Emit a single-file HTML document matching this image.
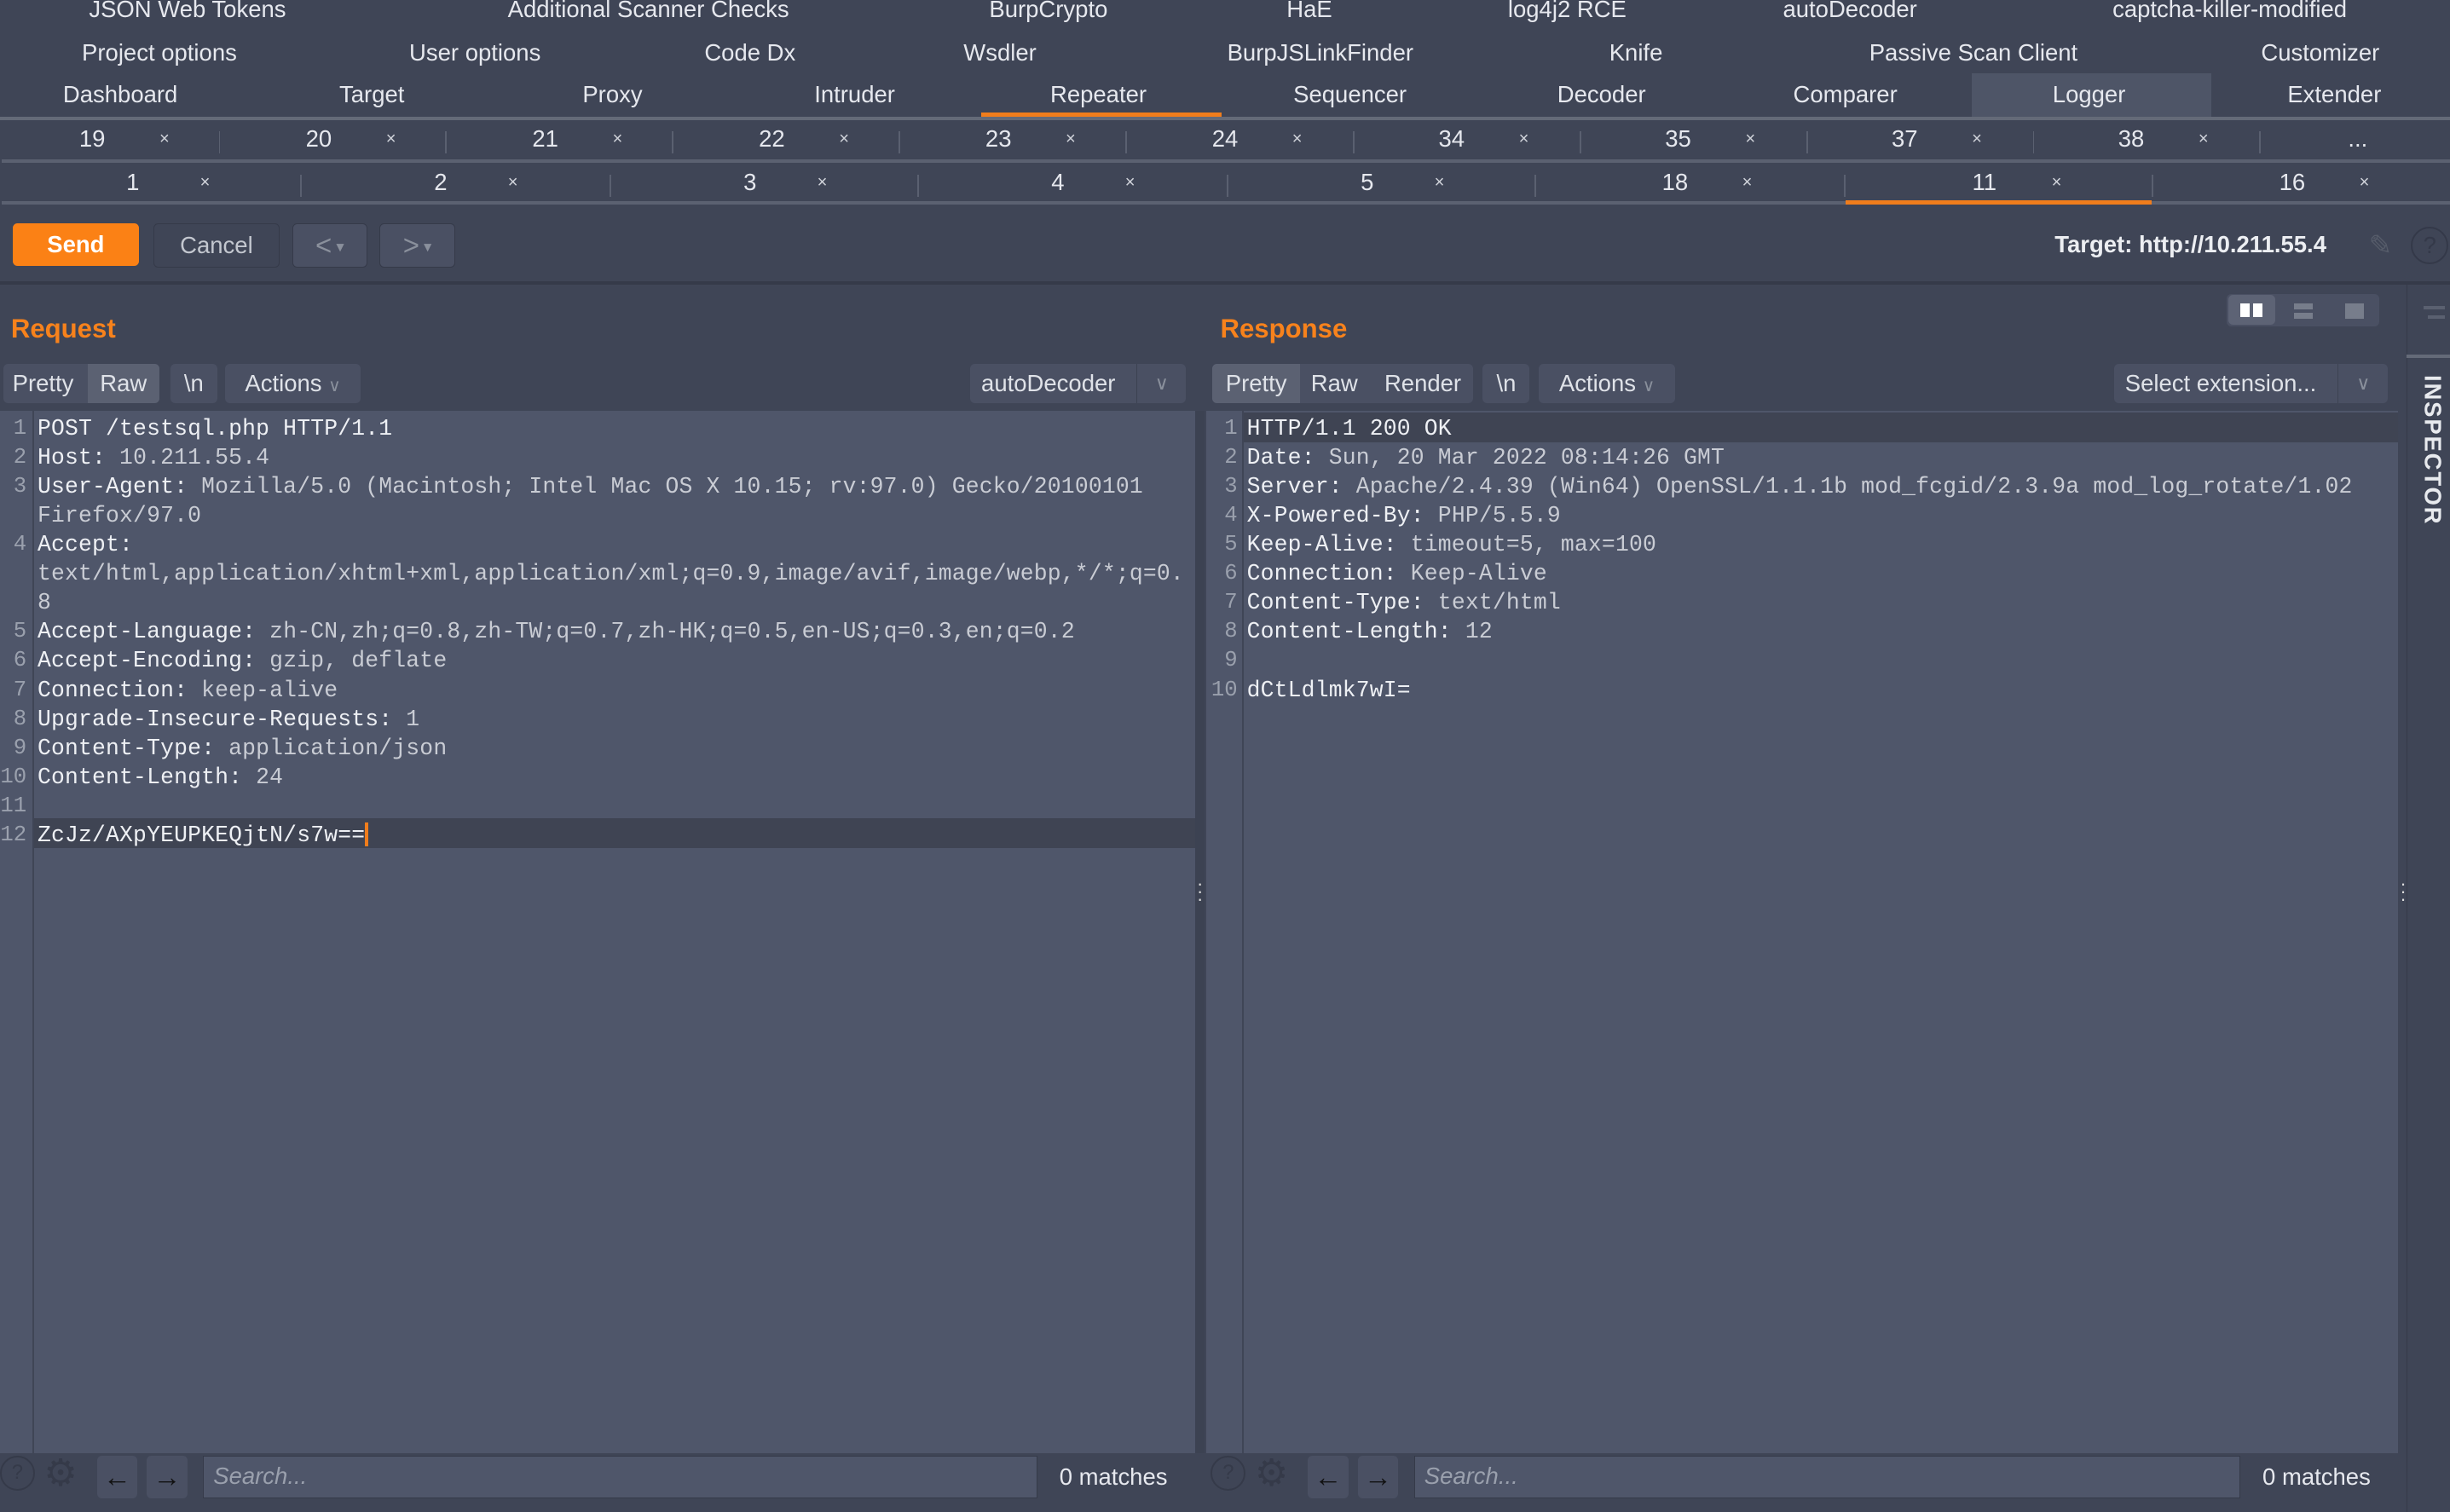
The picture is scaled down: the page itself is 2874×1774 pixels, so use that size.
<!DOCTYPE html>
<html><head><meta charset="utf-8">
<style>
html,body{margin:0;padding:0;background:#3f4556;overflow:hidden}
#w{position:relative;width:1568px;height:968px;zoom:1.8329;background:#3f4556;font-family:"Liberation Sans",Helvetica,sans-serif;color:#e6e8ee;font-size:15px}
.a{position:absolute;white-space:nowrap}
.c{transform:translateX(-50%)}
.x{font-size:11px;color:#d0d3da}
.sep{position:absolute;width:1px;background:#5a6070}
.ul{position:absolute;height:2px;background:#5b6171}
.btn{position:absolute;background:#4a5063;border-radius:3px;color:#dfe2e8;font-size:15px;text-align:center}
.mono{font-family:"Liberation Mono","DejaVu Sans Mono",monospace;font-size:14.4px;letter-spacing:0.1px;color:#c9ccd4}
.k{color:#eef0f4}
.ln{position:absolute;color:#9aa0ad;text-align:right;font-family:"Liberation Mono",monospace;font-size:14px}
</style></head><body><div id="w">
<div class="a c" style="left:120px;top:-3px">JSON Web Tokens</div>
<div class="a c" style="left:415px;top:-3px">Additional Scanner Checks</div>
<div class="a c" style="left:671px;top:-3px">BurpCrypto</div>
<div class="a c" style="left:838px;top:-3px">HaE</div>
<div class="a c" style="left:1003px;top:-3px">log4j2 RCE</div>
<div class="a c" style="left:1184px;top:-3px">autoDecoder</div>
<div class="a c" style="left:1427px;top:-3px">captcha-killer-modified</div>

<div class="a c" style="left:102px;top:25px">Project options</div>
<div class="a c" style="left:304px;top:25px">User options</div>
<div class="a c" style="left:480px;top:25px">Code Dx</div>
<div class="a c" style="left:640px;top:25px">Wsdler</div>
<div class="a c" style="left:845px;top:25px">BurpJSLinkFinder</div>
<div class="a c" style="left:1047px;top:25px">Knife</div>
<div class="a c" style="left:1263px;top:25px">Passive Scan Client</div>
<div class="a c" style="left:1485px;top:25px">Customizer</div>

<div class="a" style="left:1262px;top:47px;width:153px;height:28px;background:#4e5567"></div>
<div class="a" style="left:628px;top:72px;width:154px;height:3px;background:#f07d1c"></div>
<div class="a c" style="left:77px;top:52px">Dashboard</div>
<div class="a c" style="left:238px;top:52px">Target</div>
<div class="a c" style="left:392px;top:52px">Proxy</div>
<div class="a c" style="left:547px;top:52px">Intruder</div>
<div class="a c" style="left:703px;top:52px">Repeater</div>
<div class="a c" style="left:864px;top:52px">Sequencer</div>
<div class="a c" style="left:1025px;top:52px">Decoder</div>
<div class="a c" style="left:1181px;top:52px">Comparer</div>
<div class="a c" style="left:1337px;top:52px">Logger</div>
<div class="a c" style="left:1494px;top:52px">Extender</div>
<div class="a" style="left:0;top:75px;width:1568px;height:2px;background:#646a78"></div>

<div class="a c" style="left:59px;top:80px">19</div><div class="a x" style="left:102px;top:83px">×</div>
<div class="a c" style="left:204px;top:80px">20</div><div class="a x" style="left:247px;top:83px">×</div>
<div class="a c" style="left:349px;top:80px">21</div><div class="a x" style="left:392px;top:83px">×</div>
<div class="a c" style="left:494px;top:80px">22</div><div class="a x" style="left:537px;top:83px">×</div>
<div class="a c" style="left:639px;top:80px">23</div><div class="a x" style="left:682px;top:83px">×</div>
<div class="a c" style="left:784px;top:80px">24</div><div class="a x" style="left:827px;top:83px">×</div>
<div class="a c" style="left:929px;top:80px">34</div><div class="a x" style="left:972px;top:83px">×</div>
<div class="a c" style="left:1074px;top:80px">35</div><div class="a x" style="left:1117px;top:83px">×</div>
<div class="a c" style="left:1219px;top:80px">37</div><div class="a x" style="left:1262px;top:83px">×</div>
<div class="a c" style="left:1364px;top:80px">38</div><div class="a x" style="left:1407px;top:83px">×</div>
<div class="a c" style="left:1509px;top:80px">...</div>
<div class="sep" style="left:140px;top:84px;height:14px"></div><div class="sep" style="left:285px;top:84px;height:14px"></div>
<div class="sep" style="left:430px;top:84px;height:14px"></div><div class="sep" style="left:575px;top:84px;height:14px"></div>
<div class="sep" style="left:720px;top:84px;height:14px"></div><div class="sep" style="left:866px;top:84px;height:14px"></div>
<div class="sep" style="left:1011px;top:84px;height:14px"></div><div class="sep" style="left:1156px;top:84px;height:14px"></div>
<div class="sep" style="left:1301px;top:84px;height:14px"></div><div class="sep" style="left:1446px;top:84px;height:14px"></div>
<div class="ul" style="left:1px;top:102px;width:1567px"></div>

<div class="a c" style="left:85px;top:108px">1</div><div class="a x" style="left:128px;top:111px">×</div>
<div class="a c" style="left:282px;top:108px">2</div><div class="a x" style="left:325px;top:111px">×</div>
<div class="a c" style="left:480px;top:108px">3</div><div class="a x" style="left:523px;top:111px">×</div>
<div class="a c" style="left:677px;top:108px">4</div><div class="a x" style="left:720px;top:111px">×</div>
<div class="a c" style="left:875px;top:108px">5</div><div class="a x" style="left:918px;top:111px">×</div>
<div class="a c" style="left:1072px;top:108px">18</div><div class="a x" style="left:1115px;top:111px">×</div>
<div class="a c" style="left:1270px;top:108px">11</div><div class="a x" style="left:1313px;top:111px">×</div>
<div class="a c" style="left:1467px;top:108px">16</div><div class="a x" style="left:1510px;top:111px">×</div>
<div class="sep" style="left:192px;top:112px;height:14px"></div><div class="sep" style="left:390px;top:112px;height:14px"></div>
<div class="sep" style="left:587px;top:112px;height:14px"></div><div class="sep" style="left:785px;top:112px;height:14px"></div>
<div class="sep" style="left:982px;top:112px;height:14px"></div><div class="sep" style="left:1180px;top:112px;height:14px"></div>
<div class="sep" style="left:1377px;top:112px;height:14px"></div>
<div class="ul" style="left:1px;top:129px;width:1567px"></div>
<div class="a" style="left:1181px;top:128px;width:196px;height:3px;background:#f07d1c"></div>

<div class="btn" style="left:8px;top:143px;width:81px;height:27px;line-height:27px;background:#fb8115;color:#fff;font-weight:bold">Send</div>
<div class="btn" style="left:98px;top:143px;width:80px;height:27px;line-height:27px;background:#3f4556;border:1px solid #353a49;color:#c3c7cf">Cancel</div>
<div class="btn" style="left:187px;top:143px;width:47px;height:27px;line-height:27px;border:1px solid #353a49;color:#8a909c;font-size:18px">&lt;<span style="font-size:10px;vertical-align:2px"> ▾</span></div>
<div class="btn" style="left:243px;top:143px;width:47px;height:27px;line-height:27px;border:1px solid #353a49;color:#8a909c;font-size:18px">&gt;<span style="font-size:10px;vertical-align:2px"> ▾</span></div>
<div class="a" style="left:1315px;top:148px;font-weight:bold;color:#eceef2">Target: http://10.211.55.4</div>
<div class="a" style="left:1516px;top:146px;color:#565c6a;font-size:18px">✎</div>
<div class="a" style="left:1543px;top:145px;width:22px;height:22px;border:1.5px solid #343949;border-radius:50%;color:#343949;text-align:center;line-height:22px;font-size:15px">?</div>
<div class="a" style="left:0;top:180px;width:1568px;height:2px;background:#353a49"></div>

<div class="a" style="left:7px;top:201px;font-weight:bold;font-size:17px;color:#f7821c">Request</div>
<div class="btn" style="left:2px;top:233px;width:100px;height:25px;line-height:25px;text-align:left"><span style="padding:0 6px">Pretty</span><span style="position:absolute;left:54px;top:0;width:46px;height:25px;background:#5b6172;border-radius:0 3px 3px 0;text-align:center">Raw</span></div>
<div class="btn" style="left:109px;top:233px;width:30px;height:25px;line-height:25px">\n</div>
<div class="btn" style="left:144px;top:233px;width:87px;height:25px;line-height:25px">Actions <span style="color:#8a909c;font-size:11px">∨</span></div>
<div class="btn" style="left:621px;top:233px;width:138px;height:25px;line-height:25px;text-align:left"><span style="padding-left:7px">autoDecoder</span><span style="position:absolute;left:106px;top:0;border-left:1px solid #3c4252;width:32px;color:#8a909c;text-align:center;font-size:12px">∨</span></div>

<div class="a" style="left:0;top:263px;width:765px;height:667px;background:#4f566a"></div>
<div class="a" style="left:21px;top:263px;width:1px;height:667px;background:#3f4556"></div>
<div class="a" style="left:22px;top:524px;width:743px;height:19px;background:#3f4453"></div>
<div class="a" style="left:765px;top:263px;width:6px;height:667px;background:#3c4252"></div>
<div class="a" style="left:766px;top:563px;color:#ddd;font-size:12px;line-height:5px">·<br>·<br>·</div>
<div class="ln" style="left:0;top:265px;width:17px;line-height:18.6px">1<br>2<br>3<br><br>4<br><br><br>5<br>6<br>7<br>8<br>9<br>10<br>11<br>12</div>
<div class="a mono" style="left:24px;top:265px;line-height:18.6px"><span class="k">POST /testsql.php HTTP/1.1</span><br><span class="k">Host:</span> 10.211.55.4<br><span class="k">User-Agent:</span> Mozilla/5.0 (Macintosh; Intel Mac OS X 10.15; rv:97.0) Gecko/20100101<br>Firefox/97.0<br><span class="k">Accept:</span><br>text/html,application/xhtml+xml,application/xml;q=0.9,image/avif,image/webp,*/*;q=0.<br>8<br><span class="k">Accept-Language:</span> zh-CN,zh;q=0.8,zh-TW;q=0.7,zh-HK;q=0.5,en-US;q=0.3,en;q=0.2<br><span class="k">Accept-Encoding:</span> gzip, deflate<br><span class="k">Connection:</span> keep-alive<br><span class="k">Upgrade-Insecure-Requests:</span> 1<br><span class="k">Content-Type:</span> application/json<br><span class="k">Content-Length:</span> 24<br><br><span class="k">ZcJz/AXpYEUPKEQjtN/s7w==</span><span style="display:inline-block;width:2px;height:15px;background:#f07d1c;vertical-align:-3px"></span></div>

<div class="a" style="left:781px;top:201px;font-weight:bold;font-size:17px;color:#f7821c">Response</div>
<div class="btn" style="left:1425px;top:188px;width:98px;height:21px;background:#4a5063"></div>
<div class="a" style="left:1426px;top:189px;width:30px;height:19px;background:#5d6375;border-radius:3px"></div>
<div class="a" style="left:1434px;top:194px;width:6px;height:9px;background:#fff"></div><div class="a" style="left:1442px;top:194px;width:6px;height:9px;background:#fff"></div>
<div class="a" style="left:1468px;top:194px;width:12px;height:4px;background:#777d8b"></div><div class="a" style="left:1468px;top:200px;width:12px;height:4px;background:#777d8b"></div>
<div class="a" style="left:1501px;top:194px;width:12px;height:10px;background:#777d8b"></div>
<div class="btn" style="left:776px;top:233px;width:167px;height:25px;line-height:25px;text-align:left"><span style="position:absolute;left:0;top:0;width:56px;height:25px;background:#5b6172;border-radius:3px 0 0 3px;text-align:center">Pretty</span><span style="position:absolute;left:63px">Raw</span><span style="position:absolute;left:110px">Render</span></div>
<div class="btn" style="left:949px;top:233px;width:30px;height:25px;line-height:25px">\n</div>
<div class="btn" style="left:985px;top:233px;width:87px;height:25px;line-height:25px">Actions <span style="color:#8a909c;font-size:11px">∨</span></div>
<div class="btn" style="left:1353px;top:233px;width:175px;height:25px;line-height:25px;text-align:left"><span style="padding-left:7px">Select extension...</span><span style="position:absolute;left:143px;top:0;border-left:1px solid #3c4252;width:32px;color:#8a909c;text-align:center;font-size:12px">∨</span></div>

<div class="a" style="left:772px;top:263px;width:763px;height:667px;background:#4f566a"></div>
<div class="a" style="left:795px;top:263px;width:1px;height:667px;background:#3f4556"></div>
<div class="a" style="left:796px;top:264px;width:739px;height:19px;background:#3f4453"></div>
<div class="a" style="left:1536px;top:563px;color:#ddd;font-size:12px;line-height:5px">·<br>·<br>·</div>
<div class="ln" style="left:772px;top:265px;width:20px;line-height:18.6px">1<br>2<br>3<br>4<br>5<br>6<br>7<br>8<br>9<br>10</div>
<div class="a mono" style="left:798px;top:265px;line-height:18.6px"><span class="k">HTTP/1.1 200 OK</span><br><span class="k">Date:</span> Sun, 20 Mar 2022 08:14:26 GMT<br><span class="k">Server:</span> Apache/2.4.39 (Win64) OpenSSL/1.1.1b mod_fcgid/2.3.9a mod_log_rotate/1.02<br><span class="k">X-Powered-By:</span> PHP/5.5.9<br><span class="k">Keep-Alive:</span> timeout=5, max=100<br><span class="k">Connection:</span> Keep-Alive<br><span class="k">Content-Type:</span> text/html<br><span class="k">Content-Length:</span> 12<br><br><span class="k">dCtLdlmk7wI=</span></div>

<div class="a" style="left:1540px;top:182px;width:1px;height:786px;background:#353a49"></div>
<div class="a" style="left:1540px;top:227px;width:28px;height:2px;background:#646a78"></div>
<div class="a" style="left:1551px;top:196px;width:14px;height:2px;background:#5a6070"></div><div class="a" style="left:1554px;top:202px;width:11px;height:2px;background:#5a6070"></div>
<div class="a" style="left:1548px;top:240px;writing-mode:vertical-rl;font-weight:bold;font-size:15px;letter-spacing:1px;color:#e8eaee">INSPECTOR</div>

<div class="a" style="left:0;top:932px;width:20px;height:20px;border:1.5px solid #353a49;border-radius:50%;color:#353a49;text-align:center;line-height:20px;font-size:13px">?</div>
<div class="a" style="left:28px;top:929px;color:#353a49;font-size:24px">⚙</div>
<div class="btn" style="left:62px;top:932px;width:26px;height:27px;line-height:27px;color:#111;font-size:18px">←</div>
<div class="btn" style="left:94px;top:932px;width:26px;height:27px;line-height:27px;color:#111;font-size:18px">→</div>
<div class="a" style="left:130px;top:932px;background:#4f566a;border:1px solid #353a49;color:#9aa0ad;font-style:italic;line-height:25px;padding-left:6px;box-sizing:border-box;width:534px;height:27px">Search...</div>
<div class="a" style="left:678px;top:937px">0 matches</div>

<div class="a" style="left:775px;top:932px;width:20px;height:20px;border:1.5px solid #353a49;border-radius:50%;color:#353a49;text-align:center;line-height:20px;font-size:13px">?</div>
<div class="a" style="left:803px;top:929px;color:#353a49;font-size:24px">⚙</div>
<div class="btn" style="left:837px;top:932px;width:26px;height:27px;line-height:27px;color:#111;font-size:18px">←</div>
<div class="btn" style="left:869px;top:932px;width:26px;height:27px;line-height:27px;color:#111;font-size:18px">→</div>
<div class="a" style="left:905px;top:932px;background:#4f566a;border:1px solid #353a49;color:#9aa0ad;font-style:italic;line-height:25px;padding-left:6px;box-sizing:border-box;width:529px;height:27px">Search...</div>
<div class="a" style="left:1448px;top:937px">0 matches</div>
</div></body></html>
